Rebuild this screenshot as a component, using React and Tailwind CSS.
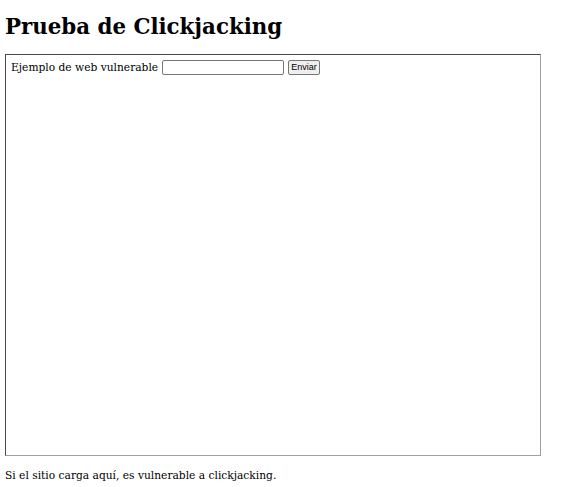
export default function App() {
  return (
    <div className="min-h-screen bg-white px-[5px] py-px text-black" style={{ fontFamily: '"DejaVu Serif", serif' }}>
      <h1 className="mt-[13px] mb-[15px] text-[21.33px] font-bold leading-[25px]">Prueba de Clickjacking</h1>

      {/* framed page */}
      <div className="h-[402px] w-[536px] border border-t-[#4a4a4a] border-l-[#4a4a4a] border-r-[#a0a0a0] border-b-[#a0a0a0] bg-white">
        <div className="mx-[5px] mt-[5px] flex items-center gap-[4px] text-[10.67px] leading-[12px]">
          <span>Ejemplo de web vulnerable</span>
          <input
            type="text"
            className="h-[15px] w-[122px] rounded-[2px] border border-[#767676] bg-white px-[2px] text-[9px] outline-none"
          />
          <button
            className="h-[15px] w-[32px] rounded-[2px] border border-[#767676] bg-[#efefef] px-[2px] text-[9px] leading-[11px]"
            style={{ fontFamily: '"Liberation Sans", Arial, sans-serif' }}
          >
            Enviar
          </button>
        </div>
      </div>

      <p className="mt-[14px] text-[10.67px] leading-[12px]">Si el sitio carga aquí, es vulnerable a clickjacking.</p>
    </div>
  );
}
